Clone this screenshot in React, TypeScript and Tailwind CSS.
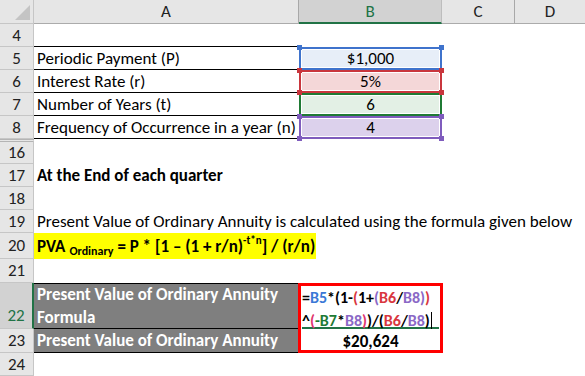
import React from "react";

const FONT = "font-['Carlito','Calibri','Lato',sans-serif]";

function RowHead({ n, sel, dbl }: { n: string; sel?: boolean; dbl?: boolean }) {
  if (sel) {
    return (
      <div className="w-[34px] shrink-0 flex items-end justify-center pb-[1px] bg-[#d2d2d2] border-r-2 border-[#217346] border-b border-b-[#c6c6c6] text-[#217346]">
        {n}
      </div>
    );
  }
  return (
    <div
      className={
        dbl
          ? "w-[34px] shrink-0 flex items-center justify-center bg-[#e6e6e6] border-r border-[#c6c6c6] border-b border-t-[3px] border-t-[#b4b4b4] border-double text-[#222]"
          : "w-[34px] shrink-0 flex items-center justify-center bg-[#e6e6e6] border-r border-b border-[#c6c6c6] text-[#222]"
      }
    >
      {n}
    </div>
  );
}

function Handle({ pos, color }: { pos: string; color: string }) {
  return <div className={`absolute w-[5px] h-[5px] ${pos} ${color} z-10`} />;
}

function InputRow({
  n,
  label,
  value,
  box,
  handles,
}: {
  n: string;
  label: string;
  value: string;
  box: string;
  handles: React.ReactNode;
}) {
  return (
    <div className="flex h-[23px]">
      <RowHead n={n} />
      <div className="w-[265px] shrink-0 border-b border-black flex items-center pl-[3px] text-black whitespace-nowrap">
        {label}
      </div>
      <div className={`w-[143px] shrink-0 relative flex items-center justify-center text-black shadow-[inset_0_0_0_1px_#fff] ${box}`}>
        {value}
        {handles}
      </div>
      <div className="flex-1" />
    </div>
  );
}

function EmptyRow({ n, h, dbl, children }: { n: string; h: string; dbl?: boolean; children?: React.ReactNode }) {
  return (
    <div className={`flex ${h}`}>
      <RowHead n={n} dbl={dbl} />
      <div className="w-[265px] shrink-0 flex items-center">{children}</div>
      <div className="flex-1" />
    </div>
  );
}

export default function App() {
  const blueTxt = "text-[#3a78d6]";
  const redTxt = "text-[#d9363e]";
  const purTxt = "text-[#8a68c6]";
  const grnTxt = "text-[#1d7a35]";
  return (
    <div className={`w-[585px] h-[376px] overflow-hidden bg-white text-[17px] leading-[23px] ${FONT}`}>
      {/* Column header */}
      <div className="flex h-[24px] bg-[#e6e6e6] text-[#222]">
        <div className="w-[34px] shrink-0 border-r border-b border-[#c6c6c6] flex items-end justify-end pr-[3px] pb-[3px]">
          <svg width="15" height="15" viewBox="0 0 15 15">
            <polygon points="15,0 15,15 0,15" fill="#c4c4c4" />
          </svg>
        </div>
        <div className="w-[265px] shrink-0 border-b border-[#ababab] border-r border-r-[#a8a8a8] flex items-center justify-center">
          A
        </div>
        <div className="w-[143px] shrink-0 bg-[#d2d2d2] border-b-2 border-[#217346] border-r border-r-[#bdbdbd] flex items-center justify-center text-[#217346]">
          B
        </div>
        <div className="w-[73px] shrink-0 border-b border-[#ababab] border-r border-r-[#a8a8a8] flex items-center justify-center">
          C
        </div>
        <div className="flex-1 border-b border-[#ababab] flex items-center justify-center">D</div>
      </div>

      {/* Row 4 */}
      <div className="flex h-[23px]">
        <RowHead n="4" />
        <div className="w-[265px] shrink-0 border-b border-black" />
        <div className="flex-1" />
      </div>

      <InputRow
        n="5"
        label="Periodic Payment (P)"
        value="$1,000"
        box="border-2 border-[#3f73cc] bg-[#e7eef8]"
        handles={
          <>
            <Handle pos="-left-[4px] -top-[4px]" color="bg-[#3f73cc]" />
            <Handle pos="-right-[4px] -top-[4px]" color="bg-[#3f73cc]" />
          </>
        }
      />
      <InputRow
        n="6"
        label="Interest Rate (r)"
        value="5%"
        box="border-2 border-[#c9363d] bg-[#f4d7d8]"
        handles={
          <>
            <Handle pos="-left-[4px] -top-[4px]" color="bg-[#c9363d]" />
            <Handle pos="-right-[4px] -top-[4px]" color="bg-[#c9363d]" />
            <Handle pos="-left-[4px] -bottom-[4px]" color="bg-[#c9363d]" />
            <Handle pos="-right-[4px] -bottom-[4px]" color="bg-[#c9363d]" />
          </>
        }
      />
      <InputRow
        n="7"
        label="Number of Years (t)"
        value="6"
        box="border-2 border-[#1f7a34] bg-[#e3f0e5]"
        handles={null}
      />
      <InputRow
        n="8"
        label="Frequency of Occurrence in a year (n)"
        value="4"
        box="border-2 border-[#7f5cbd] bg-[#dcd1ec]"
        handles={
          <>
            <Handle pos="-left-[4px] -top-[4px]" color="bg-[#7f5cbd]" />
            <Handle pos="-right-[4px] -top-[4px]" color="bg-[#7f5cbd]" />
            <Handle pos="-left-[4px] -bottom-[4px]" color="bg-[#7f5cbd]" />
            <Handle pos="-right-[4px] -bottom-[4px]" color="bg-[#7f5cbd]" />
          </>
        }
      />

      <EmptyRow n="16" h="h-[25px]" dbl />
      <EmptyRow n="17" h="h-[23px]">
        <span className="pl-[3px] font-bold whitespace-nowrap text-black">At the End of each quarter</span>
      </EmptyRow>
      <EmptyRow n="18" h="h-[23px]" />
      <EmptyRow n="19" h="h-[23px]">
        <span className="pl-[3px] whitespace-nowrap text-black">
          Present Value of Ordinary Annuity is calculated using the formula given below
        </span>
      </EmptyRow>
      <EmptyRow n="20" h="h-[26px]">
        <span className="h-full flex items-center bg-[#ffff00] pl-[3px] pr-[1px] font-bold whitespace-nowrap text-black">
          PVA<span className="text-[12px] relative top-[5px] mx-[4px]">Ordinary</span>= P * [1 – (1 + r/n)
          <span className="text-[11px] relative -top-[6px]">-t*n</span>] / (r/n)
        </span>
      </EmptyRow>
      <EmptyRow n="21" h="h-[24px]" />

      {/* Rows 22-23 */}
      <div className="flex h-[70px]">
        <div className="w-[34px] shrink-0 flex flex-col">
          <div className="h-[46px] flex">
            <RowHead n="22" sel />
          </div>
          <div className="h-[24px] flex">
            <RowHead n="23" />
          </div>
        </div>
        <div className="w-[265px] shrink-0 flex flex-col text-white font-bold">
          <div className="h-[46px] bg-[#7f7f7f] border-y border-black pl-[3px] flex flex-col justify-center leading-[23px]">
            <div className="whitespace-nowrap">Present Value of Ordinary Annuity</div>
            <div>Formula</div>
          </div>
          <div className="h-[24px] bg-[#7f7f7f] border-b border-black pl-[3px] flex items-center whitespace-nowrap">
            Present Value of Ordinary Annuity
          </div>
        </div>
        <div className="w-[145px] -ml-[1px] shrink-0 border-[3px] border-[#ff0000] flex flex-col font-bold text-black">
          <div className="h-[43px] mx-[1px] border-b-2 border-[#217346] leading-[23px] whitespace-nowrap text-[16px]">
            <div>
              =<span className={blueTxt}>B5</span>*(1-<span className={redTxt}>(</span>1+
              <span className={purTxt}>(</span>
              <span className={redTxt}>B6</span>/<span className={purTxt}>B8</span>
              <span className={purTxt}>)</span>
              <span className={redTxt}>)</span>
            </div>
            <div className="flex items-center">
              <span>^</span>
              <span className="text-[#e0356f]">(</span>
              <span className={grnTxt}>-B7</span>*<span className={purTxt}>B8</span>
              <span className="text-[#e0356f]">)</span>)/(<span className={redTxt}>B6</span>/
              <span className={purTxt}>B8</span>)
              <span className="inline-block w-px h-[17px] bg-black ml-[1px]" />
            </div>
          </div>
          <div className="flex-1 flex items-center justify-center pt-[1px]">$20,624</div>
        </div>
        <div className="flex-1" />
      </div>

      <EmptyRow n="24" h="h-[23px]" />
    </div>
  );
}
